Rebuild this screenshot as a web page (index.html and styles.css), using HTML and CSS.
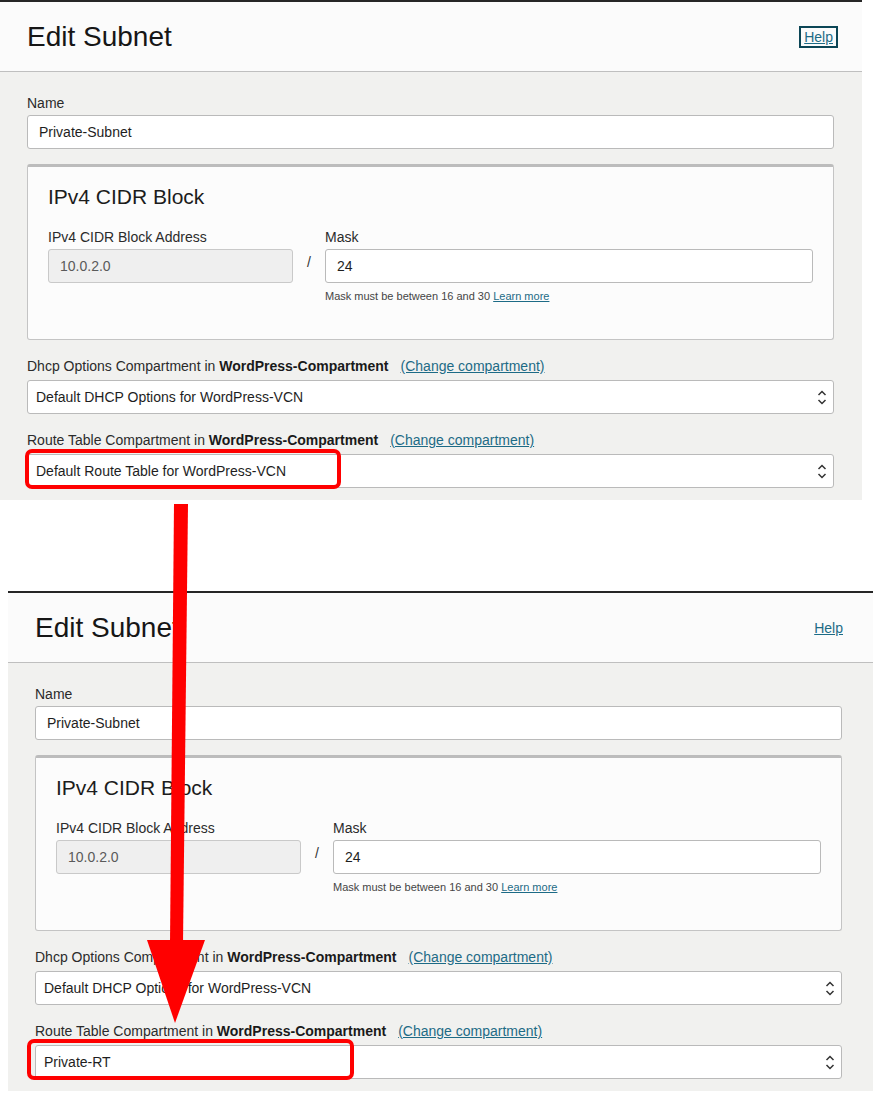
FILE: index.html
```html
<!DOCTYPE html>
<html lang="en">
<head>
<meta charset="utf-8">
<title>Edit Subnet</title>
<link rel="stylesheet" href="styles.css">
</head>
<body>
<div class="page">

  <section class="panel panel-first">
    <header class="panel-header">
      <h1 class="title">Edit Subnet</h1>
      <a class="help help-focused" href="#">Help</a>
    </header>
    <div class="panel-body">
      <div class="field">
        <label class="label">Name</label>
        <div class="input">Private-Subnet</div>
      </div>

      <div class="cidr-box">
        <h2 class="cidr-title">IPv4 CIDR Block</h2>
        <div class="cidr-row">
          <div class="cidr-col">
            <label class="label">IPv4 CIDR Block Address</label>
            <div class="input input-disabled">10.0.2.0</div>
          </div>
          <div class="slash">/</div>
          <div class="cidr-col">
            <label class="label">Mask</label>
            <div class="input">24</div>
            <p class="hint">Mask must be between 16 and 30 <a href="#" class="link">Learn more</a></p>
          </div>
        </div>
      </div>

      <div class="field field-spaced">
        <label class="label label-select">Dhcp Options Compartment in <b>WordPress-Compartment</b><a href="#" class="link change">(Change compartment)</a></label>
        <div class="select">
          <span>Default DHCP Options for WordPress-VCN</span>
          <svg class="chevrons" width="10" height="15" viewBox="0 0 10 15"><path d="M1.5 5 L5 1.5 L8.5 5 M1.5 10 L5 13.5 L8.5 10" fill="none" stroke="#333" stroke-width="1.5"/></svg>
        </div>
      </div>

      <div class="field field-spaced">
        <label class="label label-select">Route Table Compartment in <b>WordPress-Compartment</b><a href="#" class="link change">(Change compartment)</a></label>
        <div class="select select-marked">
          <span>Default Route Table for WordPress-VCN</span>
          <svg class="chevrons" width="10" height="15" viewBox="0 0 10 15"><path d="M1.5 5 L5 1.5 L8.5 5 M1.5 10 L5 13.5 L8.5 10" fill="none" stroke="#333" stroke-width="1.5"/></svg>
          <div class="mark mark-first"></div>
        </div>
      </div>
    </div>
  </section>

  <section class="panel panel-second">
    <header class="panel-header">
      <h1 class="title">Edit Subnet</h1>
      <a class="help" href="#">Help</a>
    </header>
    <div class="panel-body">
      <div class="field">
        <label class="label">Name</label>
        <div class="input">Private-Subnet</div>
      </div>

      <div class="cidr-box">
        <h2 class="cidr-title">IPv4 CIDR Block</h2>
        <div class="cidr-row">
          <div class="cidr-col">
            <label class="label">IPv4 CIDR Block Address</label>
            <div class="input input-disabled">10.0.2.0</div>
          </div>
          <div class="slash">/</div>
          <div class="cidr-col">
            <label class="label">Mask</label>
            <div class="input">24</div>
            <p class="hint">Mask must be between 16 and 30 <a href="#" class="link">Learn more</a></p>
          </div>
        </div>
      </div>

      <div class="field field-spaced">
        <label class="label label-select">Dhcp Options Compartment in <b>WordPress-Compartment</b><a href="#" class="link change">(Change compartment)</a></label>
        <div class="select">
          <span>Default DHCP Options for WordPress-VCN</span>
          <svg class="chevrons" width="10" height="15" viewBox="0 0 10 15"><path d="M1.5 5 L5 1.5 L8.5 5 M1.5 10 L5 13.5 L8.5 10" fill="none" stroke="#333" stroke-width="1.5"/></svg>
        </div>
      </div>

      <div class="field field-spaced">
        <label class="label label-select">Route Table Compartment in <b>WordPress-Compartment</b><a href="#" class="link change">(Change compartment)</a></label>
        <div class="select select-marked">
          <span>Private-RT</span>
          <svg class="chevrons" width="10" height="15" viewBox="0 0 10 15"><path d="M1.5 5 L5 1.5 L8.5 5 M1.5 10 L5 13.5 L8.5 10" fill="none" stroke="#333" stroke-width="1.5"/></svg>
          <div class="mark mark-second"></div>
        </div>
      </div>
    </div>
  </section>

  <svg class="arrow" width="873" height="1099" viewBox="0 0 873 1099">
    <polygon points="174,504 188,504 183,943 170,943" fill="#ff0000"/>
    <polygon points="147,940 205,940 175,1023" fill="#ff0000"/>
  </svg>
</div>
</body>
</html>
```

FILE: styles.css
```css
* {
  box-sizing: border-box;
}

html, body {
  margin: 0;
  padding: 0;
  background: #ffffff;
}

body {
  font-family: "Liberation Sans", Arial, Helvetica, sans-serif;
  color: #2a2a2a;
  width: 873px;
  height: 1099px;
  overflow: hidden;
}

.page {
  position: relative;
  width: 873px;
  height: 1099px;
}

.panel {
  border-top: 2px solid #262626;
  background: #f1f1ef;
}

.panel-first {
  width: 862px;
}

.panel-second {
  width: 865px;
  margin-left: 8px;
  margin-top: 91px;
}

.panel-header {
  height: 70px;
  background: #fbfbfb;
  border-bottom: 1px solid #bfbfbf;
  display: flex;
  align-items: center;
  justify-content: space-between;
  padding: 0 24px 0 27px;
}

.panel-second .panel-header {
  padding-right: 25px;
}

.title {
  margin: 0;
  font-size: 28px;
  font-weight: normal;
  color: #161616;
  line-height: 32px;
}

.help {
  font-size: 14px;
  color: #1d6b86;
  text-decoration: underline;
  line-height: 18px;
  padding: 0 3px;
  border: 2px solid transparent;
}

.help-focused {
  border-color: #0c4656;
}

.panel-body {
  padding: 22px 28px 12px 27px;
}

.panel-second .panel-body {
  padding-right: 31px;
}

.label {
  display: block;
  font-size: 14px;
  line-height: 18px;
  color: #2b2b2b;
  margin-bottom: 3px;
}

.label b {
  color: #1a1a1a;
}

.label-select {
  margin-bottom: 5px;
}

.change {
  margin-left: 12px;
}

.link {
  color: #1d6b86;
  text-decoration: underline;
}

.input {
  height: 34px;
  background: #ffffff;
  border: 1px solid #bababa;
  border-radius: 3px;
  font-size: 14px;
  line-height: 32px;
  padding: 0 11px;
  color: #1e1e1e;
}

.input-disabled {
  background: #efefef;
  border-color: #c9c9c9;
  color: #5a5a5a;
}

.cidr-box {
  margin-top: 15px;
  height: 176px;
  background: #fcfcfc;
  border: 1px solid #c4c4c4;
  border-top: 3px solid #bcbcbc;
  border-radius: 3px;
  padding: 17px 20px 0 20px;
}

.cidr-title {
  margin: 0 0 18px 0;
  font-size: 21px;
  line-height: 26px;
  font-weight: normal;
  color: #1c1c1c;
}

.cidr-row {
  display: grid;
  grid-template-columns: 245px 32px 1fr;
  align-items: start;
}

.slash {
  padding-top: 21px;
  height: 55px;
  line-height: 26px;
  text-align: center;
  font-size: 14px;
  color: #333;
}

.hint {
  margin: 6px 0 0 0;
  font-size: 11px;
  line-height: 14px;
  color: #454545;
}

.field-spaced {
  margin-top: 17px;
}

.select {
  position: relative;
  height: 34px;
  background: #ffffff;
  border: 1px solid #bababa;
  border-radius: 3px;
  font-size: 14px;
  line-height: 32px;
  padding: 0 8px;
  color: #1e1e1e;
  display: flex;
  align-items: center;
  justify-content: space-between;
}

.chevrons {
  margin-right: -2px;
}

.mark {
  position: absolute;
  border: 4px solid #ff0000;
  border-radius: 7px;
  pointer-events: none;
}

.mark-first {
  left: -3px;
  top: -6px;
  width: 316px;
  height: 40px;
}

.mark-second {
  left: -9px;
  top: -7px;
  width: 327px;
  height: 41px;
}

.arrow {
  position: absolute;
  left: 0;
  top: 0;
  pointer-events: none;
}
```
